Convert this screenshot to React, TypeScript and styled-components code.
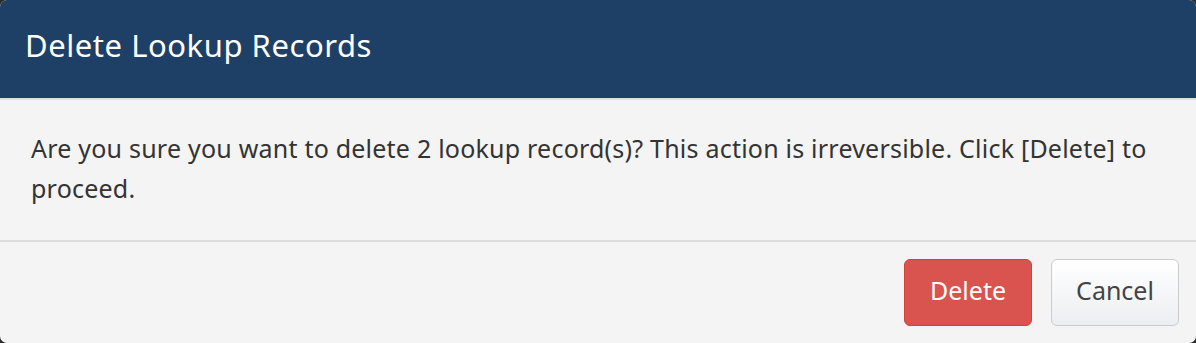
import styled, { createGlobalStyle } from "styled-components";

const GlobalStyle = createGlobalStyle`
  html, body {
    margin: 0;
    padding: 0;
    background: #2b2b2b;
  }
  * {
    box-sizing: border-box;
  }
`;

const Modal = styled.div`
  width: 1196px;
  height: 343px;
  display: flex;
  flex-direction: column;
  background: #f3f4f3;
  border-radius: 7px;
  overflow: hidden;
  font-family: "Noto Sans", "Open Sans", sans-serif;
`;

const Header = styled.div`
  height: 100px;
  background: #1f4066;
  border-bottom: 2px solid #dfe1e1;
  display: flex;
  align-items: center;
  padding: 0 25px 8px;

  h1 {
    margin: 0;
    color: #fff;
    font-size: 31px;
    font-weight: 400;
    letter-spacing: 0.55px;
  }
`;

const Body = styled.div`
  height: 142px;
  padding: 28px 31px 0;
  border-bottom: 2px solid #dcdddd;

  p {
    margin: 0;
    color: #333;
    font-size: 25px;
    line-height: 40px;
    letter-spacing: 0.22px;
  }
`;

const Footer = styled.div`
  flex: 1;
  display: flex;
  justify-content: flex-end;
  align-items: center;
  gap: 19px;
  padding: 0 17px 0 0;
`;

const Button = styled.button<{ $variant?: "danger" | "default" }>`
  width: 128px;
  height: 67px;
  padding: 0 0 5px;
  border-radius: 6px;
  font-family: inherit;
  font-size: 25px;
  cursor: pointer;
  border: 1px solid
    ${(p) => (p.$variant === "danger" ? "#d43f3a" : "#cccccc")};
  color: ${(p) => (p.$variant === "danger" ? "#fff" : "#444")};
  background: ${(p) =>
    p.$variant === "danger"
      ? "#d9534f"
      : "linear-gradient(to bottom, #ffffff, #eceef1)"};
`;

const App = () => {
  return (
    <>
      <GlobalStyle />
      <Modal>
        <Header>
          <h1>Delete Lookup Records</h1>
        </Header>
        <Body>
          <p>
            Are you sure you want to delete 2 lookup record(s)? This action is
            irreversible. Click [Delete] to proceed.
          </p>
        </Body>
        <Footer>
          <Button $variant="danger">Delete</Button>
          <Button>Cancel</Button>
        </Footer>
      </Modal>
    </>
  );
};

export default App;
